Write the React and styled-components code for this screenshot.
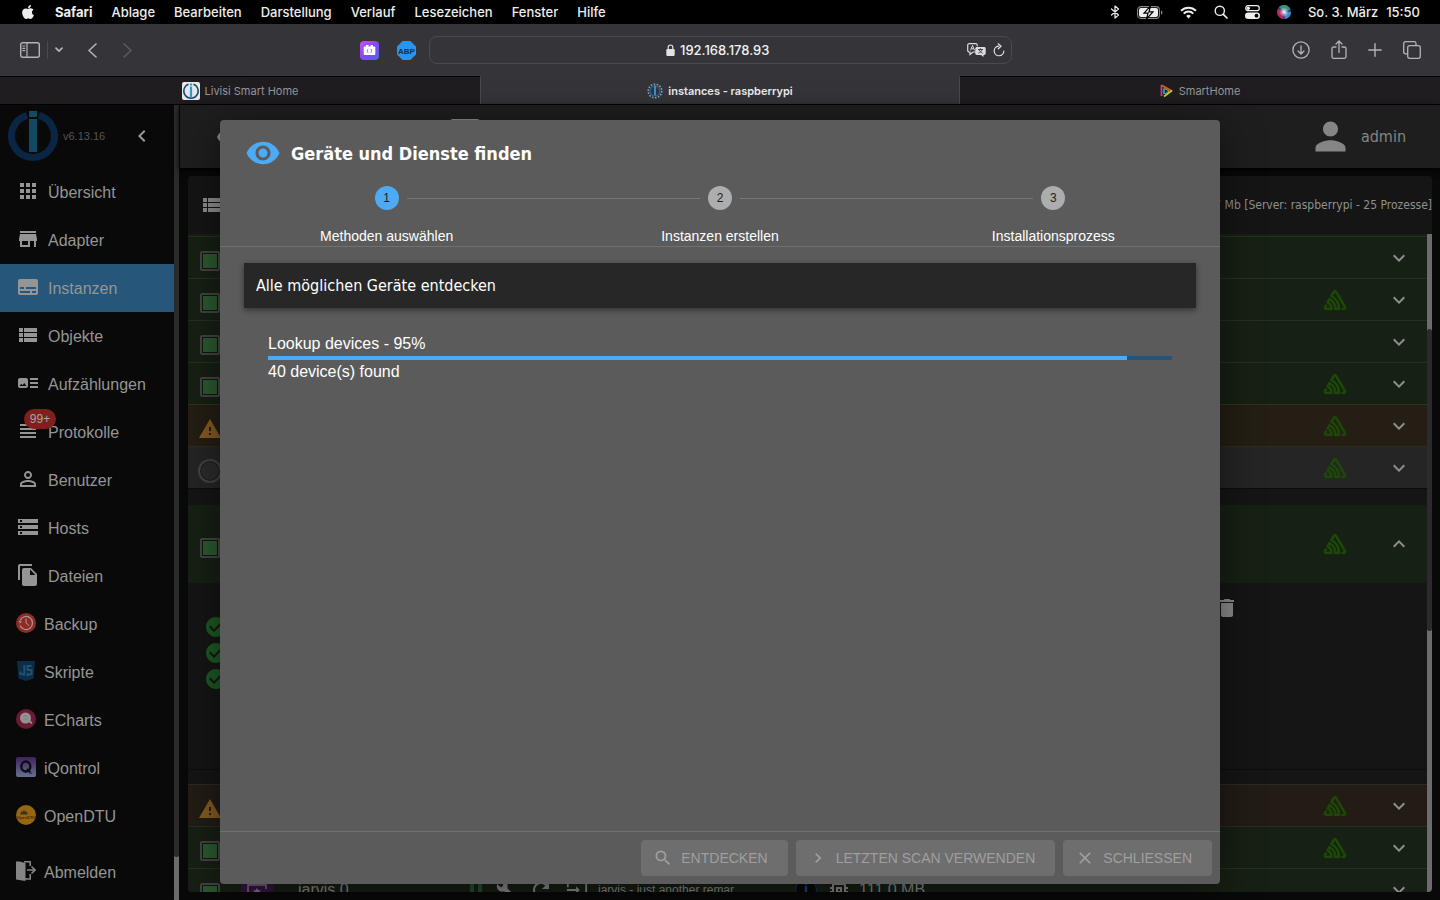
import React from "react";
import styled, { createGlobalStyle, css } from "styled-components";
import {
  MdApps,
  MdArtTrack,
  MdBuild,
  MdCheckCircle,
  MdChevronLeft,
  MdClose,
  MdDelete,
  MdExpandLess,
  MdExpandMore,
  MdFileCopy,
  MdInput,
  MdMemory,
  MdNavigateNext,
  MdPerson,
  MdPersonOutline,
  MdRefresh,
  MdSearch,
  MdStorage,
  MdStore,
  MdSubtitles,
  MdViewHeadline,
  MdViewList,
  MdVisibility,
  MdWarning,
} from "react-icons/md";
import { FaApple } from "react-icons/fa";
import { SiSentry } from "react-icons/si";

const system = `Inter, "Liberation Sans", sans-serif`;
const sans = `"Liberation Sans", Arial, sans-serif`;
const tahoma = `"DejaVu Sans Condensed", "Noto Sans", sans-serif`;

const GlobalStyle = createGlobalStyle`
  * {
    box-sizing: border-box;
  }
  body {
    margin: 0;
    background: #000000;
    font-family: ${sans};
    color: #8c8c8c;
  }
  svg {
    display: block;
    flex: none;
  }
  a {
    color: inherit;
    text-decoration: none;
  }
  button {
    font-family: inherit;
    padding: 0;
    border: none;
    background: none;
    color: inherit;
  }
`;

const Screen = styled.div`
  display: flex;
  flex-direction: column;
  height: 100vh;
  overflow: hidden;
`;

/* ---------- macOS menu bar ---------- */

const MenuBar = styled.header`
  display: flex;
  flex: none;
  align-items: center;
  justify-content: space-between;
  height: 24px;
  padding: 0 20px;
  background: #000000;
  color: #eeeeee;
  font-family: ${system};
  font-size: 13px;
  font-weight: 500;
`;

const MenuGroup = styled.div`
  display: flex;
  align-items: center;
  gap: ${(props) => props.$gap}px;
  white-space: nowrap;
`;

const MenuItem = styled.a`
  font-weight: ${(props) => (props.$bold ? 700 : 500)};
`;

/* ---------- Safari ---------- */

const Toolbar = styled.div`
  display: grid;
  grid-template-columns: 1fr minmax(0, 583px) 1fr;
  flex: none;
  align-items: center;
  height: 52px;
  background: #353439;
  color: #b4b4b6;
`;

const ToolGroup = styled.div`
  display: flex;
  align-items: center;
  justify-content: ${(props) => (props.$end ? "flex-end" : "space-between")};
  gap: ${(props) => props.$gap || 0}px;
  padding: ${(props) => props.$padding || "0"};
`;

const ToolButton = styled.button`
  display: flex;
  color: ${(props) => (props.$dim ? "#5c5b60" : "inherit")};
`;

const Separator = styled.span`
  width: 1px;
  height: 18px;
  background: #4a494e;
`;

const AddressBar = styled.div`
  display: grid;
  grid-template-columns: 1fr auto 1fr;
  align-items: center;
  height: 28px;
  padding: 0 6px;
  border: 1px solid #4a494e;
  border-radius: 8px;
  color: #e2e2e3;
`;

const Address = styled.label`
  grid-column: 2;
  display: flex;
  align-items: center;
  gap: 5px;

  input {
    width: 94px;
    padding: 0;
    border: none;
    outline: none;
    background: none;
    color: #f2f2f2;
    font-family: ${system};
    font-size: 13px;
    font-weight: 500;
  }
`;

const TabBar = styled.nav`
  display: grid;
  grid-template-columns: repeat(3, 1fr);
  flex: none;
  height: 28px;
  background: #1f1d20;
`;

const BrowserTab = styled.a`
  display: flex;
  align-items: center;
  justify-content: center;
  gap: 5px;
  border-top: 1px solid #000000;
  color: #98979a;
  font-family: ${system};
  font-size: 11px;
  font-weight: 400;
  ${(props) =>
    props.$active &&
    css`
      background: #353439;
      border-top-color: #353439;
      border-left: 1px solid #4a494e;
      border-right: 1px solid #4a494e;
      color: #ececec;
      font-weight: 600;
    `}
`;

/* ---------- ioBroker admin ---------- */

const Page = styled.div`
  position: relative;
  display: flex;
  flex: 1;
  min-height: 0;
  border-top: 1px solid #000000;
  background: #090909;
`;

const Sidebar = styled.aside`
  display: flex;
  flex: none;
  flex-direction: column;
  width: 174px;
  background: #090909;
`;

const SidebarHead = styled.div`
  display: flex;
  align-items: center;
  height: 63px;
  padding: 0 20px 2px 8px;
  font-size: 11px;
  color: #555555;

  span {
    flex: 1;
    padding-left: 5px;
  }
  button {
    color: #9a9a9a;
  }
`;

const NavItem = styled.a`
  display: flex;
  flex: none;
  align-items: center;
  gap: 8px;
  height: 48px;
  padding: 0 16px;
  font-size: 16px;
  color: #959595;
  background: ${(props) => (props.$selected ? "#26577a" : "transparent")};
`;

const NavIcon = styled.span`
  position: relative;
  padding-bottom: 2px;
`;

const NavLabel = styled.span`
  padding-top: 2px;
`;

const SidebarFoot = styled.div`
  margin-top: 8px;
`;

const Badge = styled.span`
  position: absolute;
  left: 8px;
  top: -10px;
  width: 32px;
  height: 20px;
  border-radius: 10px;
  background: #80201c;
  color: #a5a5a5;
  font-size: 12px;
  line-height: 20px;
  text-align: center;
`;

const SidebarTrack = styled.div`
  flex: none;
  width: 5px;
  margin-right: 1px;
  background: #6c6c6c;

  &::before {
    content: "";
    display: block;
    height: calc(100% - 43px);
    border-radius: 0 0 3px 3px;
    background: #2b2b2b;
  }
`;

const Main = styled.main`
  display: flex;
  flex: 1;
  flex-direction: column;
  min-width: 0;
`;

const AppBar = styled.div`
  display: flex;
  flex: none;
  align-items: center;
  height: 63px;
  padding: 0 34px 0 36px;
  background: #1e1e1e;
  box-shadow: 0 2px 6px #000000;
`;

const AppBarTools = styled.div`
  display: flex;
  flex: 1;
  align-items: center;

  i {
    width: 34px;
    height: 34px;
    margin-left: 126px;
    border-radius: 17px;
    background: #27527a;
  }
  b {
    width: 30px;
    height: 36px;
    margin-left: 50px;
    border-radius: 3px;
    background: #8c8c8c;
  }
`;

const User = styled.div`
  display: flex;
  align-items: center;
  gap: 8px;
  color: #858585;
  font-family: ${tahoma};
  font-size: 16px;
`;

const Panel = styled.section`
  display: flex;
  flex: 1;
  flex-direction: column;
  min-height: 0;
  margin: 8px;
  overflow: hidden;
  border-radius: 4px;
  background: #151515;
`;

const PanelHead = styled.div`
  display: flex;
  flex: none;
  align-items: center;
  justify-content: space-between;
  height: 58px;
  padding-left: 12px;
  color: #909090;
  font-family: ${tahoma};
  font-size: 12px;
`;

const PanelBody = styled.div`
  display: flex;
  flex: 1;
  min-height: 0;
`;

const List = styled.div`
  flex: 1;
  min-width: 0;
  padding-top: 2px;
  overflow: hidden;
  background: linear-gradient(#172014 2px, transparent 2px);
`;

const ListTrack = styled.div`
  flex: none;
  width: 5px;
  padding-top: 95px;
  background: #6c6c6c;

  &::before {
    content: "";
    display: block;
    height: 302px;
    border-radius: 3px;
    background: #2b2b2b;
  }
`;

const tones = {
  green: "#172014",
  orange: "#241e14",
  brown: "#221c15",
  grey: "#252525",
};

const lines = {
  green: "#253022",
  orange: "#2f331d",
  brown: "#2c2a24",
  grey: "#2e2c1d",
};

const Row = styled.div`
  display: flex;
  align-items: center;
  height: ${(props) => (props.$tall ? 78 : 42)}px;
  padding-right: 16px;
  border-top: ${(props) => (props.$tall ? "none" : `1px solid ${lines[props.$tone]}`)};
  background: ${(props) => tones[props.$tone]};
`;

const StateCell = styled.div`
  display: flex;
  justify-content: center;
  width: 24px;
  margin-left: 10px;
  padding-top: 7px;
`;

const AliveBox = styled.span`
  width: 20px;
  height: 20px;
  border: 2px solid #444444;
  border-radius: 2px;
  background: #2c5a30;
  box-shadow: inset 0 0 0 1px #10180f;
`;

const DisabledDot = styled.span`
  width: 24px;
  height: 24px;
  border: 2px solid #444444;
  border-radius: 12px;
  background: #2c2c2c;
  box-shadow: inset 0 0 0 1px #1c1c1c;
`;

const RowMiddle = styled.div`
  display: flex;
  flex: 1;
  align-items: center;
  min-width: 0;
`;

const SentryCell = styled.div`
  width: 24px;
  margin-right: 39px;
  color: #1d4a05;

  svg {
    overflow: visible;
    stroke: currentColor;
    stroke-width: 1;
  }
`;

const ExpandButton = styled.button`
  display: flex;
  color: #8e8e8e;
`;

const Spacer = styled.div`
  height: ${(props) => props.$height}px;
  border-top: 1px solid #0d0d0d;
`;

const Details = styled.div`
  display: flex;
  justify-content: space-between;
  height: 186px;
  padding: 13px 188px 0 16px;
`;

const Checks = styled.div`
  display: flex;
  flex-direction: column;
  gap: 2px;
  padding-top: 19px;
  color: #1d5a22;
`;

const AdapterTile = styled.span`
  display: grid;
  place-items: center;
  width: 32px;
  height: 32px;
  margin-left: 19px;
  background: #38134a;
`;

const InstanceName = styled.strong`
  width: 172px;
  margin-left: 25px;
  font-size: 16px;
  font-weight: 400;
`;

const Bars = styled.span`
  width: 12px;
  height: 20px;
  margin-right: 14px;
  border-left: 4px solid #24522a;
  border-right: 4px solid #24522a;
`;

const RowTools = styled.span`
  display: flex;
  align-items: center;
  gap: 13px;
`;

const InstanceNote = styled.span`
  width: 197px;
  margin-left: 10px;
  font-size: 12px;
`;

const InfoRing = styled.span`
  width: 22px;
  height: 22px;
  border: 1px solid #12355c;
  border-radius: 11px;
  background: #07090c;
  color: #1a4a80;
  font-size: 16px;
  font-weight: 700;
  line-height: 20px;
  text-align: center;
`;

const Memory = styled.span`
  display: flex;
  align-items: center;
  gap: 8px;
  margin-left: 10px;
  font-size: 16px;
`;

/* ---------- discovery dialog ---------- */

const Overlay = styled.div`
  position: absolute;
  inset: -1px 0 0;
  display: flex;
  justify-content: center;
  padding: 16px;
`;

const Dialog = styled.div`
  display: flex;
  flex-direction: column;
  width: 100%;
  max-width: 1000px;
  border-radius: 4px;
  background: #5b5b5b;
  color: #ffffff;
  box-shadow: 0 8px 40px rgba(0, 0, 0, 0.5);
`;

const DialogTitle = styled.h2`
  display: flex;
  align-items: center;
  gap: 10px;
  height: 66px;
  margin: 0;
  padding: 0 25px;
  font-family: ${tahoma};
  font-size: 18px;
  font-weight: 700;

  svg {
    color: #4dabf5;
  }
`;

const Stepper = styled.ol`
  display: grid;
  grid-template-columns: repeat(3, 1fr);
  margin: 0;
  padding: 0;
  list-style: none;
  border-bottom: 1px solid #707070;
`;

const Step = styled.li`
  display: grid;
  grid-template-columns: 1fr 24px 1fr;
  align-items: center;
  column-gap: 8px;
  font-size: 14px;
  line-height: 20px;

  /* connector halves on both sides of the circle */
  &::before,
  &::after {
    content: "";
    height: 1px;
    background: #777777;
  }
  &::before {
    order: 0;
  }
  &::after {
    order: 2;
  }
  &:first-child::before,
  &:last-child::after {
    visibility: hidden;
  }
`;

const StepCircle = styled.span`
  order: 1;
  width: 24px;
  height: 24px;
  border-radius: 12px;
  background: ${(props) => (props.$active ? "#4dabf5" : "#adadad")};
  color: #212121;
  font-size: 12px;
  line-height: 24px;
  text-align: center;
`;

const StepLabel = styled.span`
  order: 3;
  grid-column: 1 / -1;
  padding-top: 16px;
  text-align: center;
`;

const DialogContent = styled.div`
  flex: 1;
  padding: 16px 24px;
`;

const Heading = styled.div`
  padding: 0 12px;
  background: #272727;
  box-shadow: 0 2px 6px rgba(0, 0, 0, 0.45);
  font-family: ${tahoma};
  font-size: 16px;
  line-height: 45px;
`;

const Lookup = styled.div`
  padding: 24px;
  font-size: 16px;
  line-height: 24px;
`;

const Progress = styled.div`
  height: 4px;
  background: #265478;

  div {
    height: 4px;
    background: #4dabf5;
  }
`;

const DialogActions = styled.div`
  display: flex;
  justify-content: flex-end;
  gap: 8px;
  padding: 8px;
  border-top: 1px solid #707070;
`;

const ActionButton = styled.button`
  display: flex;
  align-items: center;
  gap: 8px;
  height: 36px;
  padding: 0 20px 0 12px;
  border-radius: 4px;
  background: #6e6e6e;
  color: #9f9f9f;
  font-size: 14px;
  text-transform: uppercase;
`;

/* ---------- drawings ---------- */

const stroke = {
  fill: "none",
  stroke: "currentColor",
  strokeWidth: 1.4,
  strokeLinecap: "round",
  strokeLinejoin: "round",
};

const BluetoothIcon = () => (
  <svg width="10" height="14" viewBox="0 0 10 14" {...stroke} strokeWidth="1.2">
    <path d="M1.5 4l7 6L5 13V1l3.500 3-7 6" />
  </svg>
);

const BatteryIcon = () => (
  <svg width="26" height="13" viewBox="0 0 26 13">
    <rect x="0.6" y="0.6" width="21.800" height="11.800" rx="3.400" fill="none" stroke="#8a8a8a" strokeWidth="1.100" />
    <rect x="2" y="2" width="19" height="9" rx="2" fill="#eeeeee" />
    <path d="M24 4.500c1 .3 1.400 1 1.400 2s-.4 1.700-1.400 2z" fill="#8a8a8a" />
    <path d="M13.500 0L7 7.200h4L9.500 13 16 5.800h-4z" fill="#eeeeee" stroke="#000000" strokeWidth="1.200" />
  </svg>
);

const WifiIcon = () => (
  <svg width="17" height="13" viewBox="0 0 17 13" fill="none" stroke="#eeeeee" strokeWidth="2">
    <path d="M1 4.800a10.700 10.700 0 0 1 15 0M3.700 7.600a6.800 6.800 0 0 1 9.600 0" />
    <path d="M8.500 12.400L6.200 9.900a3.300 3.300 0 0 1 4.600 0z" fill="#eeeeee" stroke="none" />
  </svg>
);

const SpotlightIcon = () => (
  <svg width="14" height="14" viewBox="0 0 14 14" {...stroke}>
    <circle cx="5.800" cy="5.800" r="4.600" />
    <path d="M9.300 9.300L13 13" strokeWidth="1.700" />
  </svg>
);

const ControlIcon = () => (
  <svg width="15" height="14" viewBox="0 0 15 14">
    <rect x="0.700" y="0.700" width="13.600" height="5" rx="2.500" fill="none" stroke="#eeeeee" strokeWidth="1.200" />
    <circle cx="3.300" cy="3.200" r="1.700" fill="#eeeeee" />
    <rect x="0" y="7.500" width="15" height="6.500" rx="3.200" fill="#eeeeee" />
    <circle cx="11.500" cy="10.700" r="1.900" fill="#000000" />
  </svg>
);

const SiriIcon = () => (
  <svg width="14" height="14" viewBox="0 0 14 14">
    <defs>
      <radialGradient id="siri">
        <stop offset="0" stopColor="#ffffff" />
        <stop offset="0.5" stopColor="#ffffff" stopOpacity="0.4" />
        <stop offset="1" stopColor="#ffffff" stopOpacity="0" />
      </radialGradient>
    </defs>
    <circle cx="7" cy="7" r="7" fill="#34437c" />
    <path d="M1 4a7 7 0 0 0 5 10l1-7z" fill="#b4285f" />
    <path d="M2 2a7 7 0 0 1 11.500 2.500L7 7z" fill="#3b8d80" />
    <path d="M14 7a7 7 0 0 1-6 7L7 7z" fill="#3d8bd0" />
    <circle cx="7" cy="7" r="5" fill="url(#siri)" />
  </svg>
);

const SidebarIcon = () => (
  <svg width="20" height="16" viewBox="0 0 20 16" {...stroke}>
    <rect x="0.700" y="0.700" width="18.600" height="14.600" rx="2" />
    <path d="M7 1v14M2.800 4h2M2.800 6.300h2M2.800 8.600h2" strokeWidth="1.200" />
  </svg>
);

const CaretIcon = () => (
  <svg width="8" height="6" viewBox="0 0 8 6" {...stroke} strokeWidth="1.700">
    <path d="M1 1.200l3 3 3-3" />
  </svg>
);

const BackIcon = () => (
  <svg width="9" height="15" viewBox="0 0 9 15" {...stroke} strokeWidth="1.600">
    <path d="M8 1L1 7.500 8 14" />
  </svg>
);

const ForwardIcon = () => (
  <svg width="9" height="15" viewBox="0 0 9 15" {...stroke} strokeWidth="1.600">
    <path d="M1 1l7 6.500L1 14" />
  </svg>
);

const BrickIcon = () => (
  <svg width="19" height="19" viewBox="0 0 19 19">
    <defs>
      <linearGradient id="brick" x1="0" y1="0" x2="1" y2="1">
        <stop offset="0" stopColor="#c552ee" />
        <stop offset="0.5" stopColor="#8548f0" />
        <stop offset="1" stopColor="#4a63f4" />
      </linearGradient>
    </defs>
    <rect width="19" height="19" rx="4" fill="url(#brick)" />
    <path d="M4.500 5.500H6V4h2.500v1.500h2V4H13v1.500h1.500c.6 0 .8.300.8.800v7c0 .5-.3.800-.8.800h-10c-.5 0-.8-.3-.8-.8v-7c0-.5.300-.8.800-.8z" fill="#ffffff" />
    <path d="M8.200 7.800c-1 .8-.2 1.200-1 2 .8.800 0 1.300 1 2M10.800 7.800c1 .8.200 1.200 1 2-.8.800 0 1.300-1 2" fill="none" stroke="#8a4df0" />
  </svg>
);

const AbpIcon = () => (
  <svg width="19" height="19" viewBox="0 0 19 19">
    <path d="M5.600 0h7.800L19 5.600v7.800L13.400 19H5.600L0 13.400V5.600z" fill="#2994ee" />
    <text x="9.500" y="12.500" textAnchor="middle" fontFamily="Liberation Sans" fontSize="8" fontWeight="700" fill="#252a38">
      ABP
    </text>
  </svg>
);

const LockIcon = () => (
  <svg width="9" height="12" viewBox="0 0 9 12">
    <rect x="0.300" y="5" width="8.400" height="7" rx="1.200" fill="#e2e2e3" />
    <path d="M2.200 5.500V3.300a2.300 2.300 0 0 1 4.600 0v2.200" fill="none" stroke="#e2e2e3" strokeWidth="1.200" />
  </svg>
);

const TranslateIcon = () => (
  <svg width="19" height="14" viewBox="0 0 19 14">
    <path d="M9 9H6l-3 2.500V9H2.300C1.300 9 .7 8.300.7 7.400V2.300C.7 1.400 1.300.7 2.300.7h6.400c1 0 1.600.7 1.600 1.600v.9" fill="none" stroke="#dcdcdd" strokeWidth="1.200" />
    <path d="M3.500 7.300l2-4.800 2 4.800M4.300 5.800h2.400" fill="none" stroke="#dcdcdd" />
    <path d="M10 4h7c1 0 1.700.7 1.700 1.600v4.700c0 1-.7 1.600-1.700 1.600h-.5v2L14 11.900h-4c-1 0-1.700-.7-1.700-1.600V5.600C8.300 4.700 9 4 10 4z" fill="#dcdcdd" />
    <path d="M11 6.500h5M13.500 5.300v1.200M15 6.500c-.4 1.800-2 3-3.700 3.700M12 6.500c.4 1.800 2 3 3.700 3.700" fill="none" stroke="#353439" strokeWidth="0.900" />
  </svg>
);

const ReloadIcon = () => (
  <svg width="12" height="14" viewBox="0 0 12 14" {...stroke} strokeWidth="1.200">
    <path d="M5.500 3.200A4.800 4.800 0 1 0 10.800 8M5.200.8l2.800 2.500-2.700 2.500" />
  </svg>
);

const DownloadIcon = () => (
  <svg width="18" height="18" viewBox="0 0 18 18" {...stroke} strokeWidth="1.300">
    <circle cx="9" cy="9" r="8.100" />
    <path d="M9 4.800v8M6 10l3 3 3-3" />
  </svg>
);

const ShareIcon = () => (
  <svg width="16" height="20" viewBox="0 0 16 20" {...stroke} strokeWidth="1.300">
    <path d="M5 7H2.500C1.500 7 1 7.500 1 8.500v8c0 1 .5 1.800 1.500 1.800h11c1 0 1.500-.8 1.500-1.800v-8c0-1-.5-1.500-1.500-1.500H11M8 12.500V1.500M5 4l3-3 3 3" />
  </svg>
);

const PlusIcon = () => (
  <svg width="14" height="14" viewBox="0 0 14 14" {...stroke}>
    <path d="M7 .8v12.400M.8 7h12.400" />
  </svg>
);

const OverviewIcon = () => (
  <svg width="18" height="18" viewBox="0 0 18 18" {...stroke} strokeWidth="1.300">
    <rect x="4.700" y="4.700" width="12.600" height="12.600" rx="2" />
    <path d="M4.700 12.800H2.500c-1.200 0-1.800-.7-1.800-1.800V2.500C.7 1.400 1.400.7 2.500.7h8.700c1.100 0 1.800.7 1.800 1.800v2" />
  </svg>
);

const LivisiIcon = () => (
  <svg width="18" height="18" viewBox="0 0 18 18">
    <rect width="18" height="18" rx="2" fill="#e8e8e8" />
    <path d="M6.500 2.200a7.200 7.200 0 1 0 5 0" fill="none" stroke="#174a78" strokeWidth="1.500" />
    <path d="M9 1.500v2M9 4.500v10.500" stroke="#3399cc" strokeWidth="2.200" />
  </svg>
);

const BrokerTabIcon = () => (
  <svg width="16" height="16" viewBox="0 0 16 16" fill="none">
    <circle cx="8" cy="8" r="6.800" stroke="#8fa5b5" strokeWidth="1.600" strokeDasharray="1.500 1.550" />
    <circle cx="8" cy="8" r="5" stroke="#245f8c" strokeWidth="1.600" />
    <path d="M8 2.500v10" stroke="#3d9bc8" strokeWidth="1.800" />
  </svg>
);

const SmartHomeIcon = () => (
  <svg width="14" height="14" viewBox="0 0 14 14" fill="none" strokeWidth="1.800">
    <path d="M1.500 1v11" stroke="#c23f8d" />
    <path d="M1.500 1.200L12 7" stroke="#e05a2b" />
    <path d="M12 6.500L4 12.500" stroke="#c9c92f" />
    <path d="M4 4.500v5.500" stroke="#2f9fd0" />
    <path d="M4.500 4.500L9 7l-4 3" stroke="#8cbf3b" strokeWidth="1" />
  </svg>
);

const BrokerLogo = () => (
  <svg width="50" height="50" viewBox="0 0 50 50" fill="none">
    <path d="M19 4.300a21.500 21.500 0 1 0 12 0" stroke="#0b2544" strokeWidth="7" />
    <path d="M21 0h8v6h-8zM21 8h8v33h-8z" fill="#134a63" />
  </svg>
);

const BackupIcon = () => (
  <svg width="20" height="20" viewBox="0 0 20 20" fill="none" stroke="#a39a98">
    <circle cx="10" cy="10" r="10" fill="#8f2a24" stroke="none" />
    <path d="M4 12.500a6.500 6.500 0 1 0 0-5" strokeWidth="1.200" />
    <path d="M2.500 8l1.500 2.500L6 8.500z" fill="#a39a98" stroke="none" />
    <path d="M10 5.500V10l3 2.500" />
  </svg>
);

const ScriptIcon = () => (
  <svg width="20" height="20" viewBox="0 0 20 20" fill="none">
    <path d="M1 0h18l-1.500 17.500L10 20l-7.500-2.500z" fill="#0d2c48" />
    <path d="M8.300 4v9.700l-3.800-.8v-2.500M15.500 5h-4v4h4v4l-4 1.200v-2.500" stroke="#1d5474" strokeWidth="1.900" />
  </svg>
);

const EchartsIcon = () => (
  <svg width="20" height="20" viewBox="0 0 20 20">
    <circle cx="10" cy="10" r="10" fill="#6b1a33" />
    <circle cx="9.500" cy="9" r="5.500" fill="#969294" />
    <path d="M12 12.500h2l.5-1.500 1.500 2.500c.8 1-.2 1.500-1 1.200z" fill="#969294" />
    <path d="M7 8c2-2 4-1 5 .5M7.500 10.500c1.500-1 3-.5 4 .5" stroke="#7a6c72" fill="none" strokeWidth="0.700" />
  </svg>
);

const IqontrolIcon = () => (
  <svg width="20" height="20" viewBox="0 0 20 20">
    <defs>
      <linearGradient id="iq" x1="0" y1="0" x2="0" y2="1">
        <stop offset="0" stopColor="#3e2160" />
        <stop offset="1" stopColor="#66728f" />
      </linearGradient>
    </defs>
    <rect width="20" height="20" rx="2" fill="url(#iq)" />
    <ellipse cx="9.800" cy="9.500" rx="4.500" ry="5" fill="none" stroke="#0d0d16" strokeWidth="2.400" />
    <path d="M11 12l3.500 3.800" stroke="#0d0d16" strokeWidth="2" />
    <circle cx="15" cy="16" r="1.300" fill="#532b86" />
  </svg>
);

const OpenDtuIcon = () => (
  <svg width="20" height="20" viewBox="0 0 20 20">
    <circle cx="10" cy="10" r="10" fill="#986512" />
    <path d="M4 9.500l1.500-3h2V5h1v1.500H11l.8 3z" fill="#3d3220" />
    <text x="10" y="14" textAnchor="middle" fontFamily="Liberation Sans" fontSize="4" fontWeight="700" fill="#3d2d10">
      OpenDTU
    </text>
  </svg>
);

const LogoutIcon = () => (
  <svg width="20" height="20" viewBox="0 0 20 20" fill="none" stroke="#858585" strokeWidth="1.600">
    <path d="M0 .5h3.500L9.500 2v18L0 18.500z" fill="#858585" stroke="none" />
    <path d="M8 .8h6.200V5M14.200 13v5H9M11 9h8M15.500 5.500L19 9l-3.500 3.500" />
  </svg>
);

const JarvisIcon = () => (
  <svg width="32" height="32" viewBox="0 0 32 32" fill="none" stroke="#857a8c" strokeWidth="1.500">
    <path d="M7 18v-7h18v4M25 18v7H7v-3" />
    <path d="M16 13.500l1.200 2.800 3 .2-2.300 2 .8 3-2.700-1.600-2.700 1.600.8-3-2.300-2 3-.2z" fill="#857a8c" stroke="none" />
  </svg>
);

/* ---------- data ---------- */

const menus = ["Ablage", "Bearbeiten", "Darstellung", "Verlauf", "Lesezeichen", "Fenster", "Hilfe"];

const pages = [
  { label: "Übersicht", icon: <MdApps size={24} /> },
  { label: "Adapter", icon: <MdStore size={24} /> },
  { label: "Instanzen", icon: <MdSubtitles size={24} />, selected: true },
  { label: "Objekte", icon: <MdViewList size={24} /> },
  { label: "Aufzählungen", icon: <MdArtTrack size={24} /> },
  { label: "Protokolle", icon: <MdViewHeadline size={24} />, badge: "99+" },
  { label: "Benutzer", icon: <MdPersonOutline size={24} /> },
  { label: "Hosts", icon: <MdStorage size={24} /> },
  { label: "Dateien", icon: <MdFileCopy size={24} /> },
  { label: "Backup", icon: <BackupIcon /> },
  { label: "Skripte", icon: <ScriptIcon /> },
  { label: "ECharts", icon: <EchartsIcon /> },
  { label: "iQontrol", icon: <IqontrolIcon /> },
  { label: "OpenDTU", icon: <OpenDtuIcon /> },
];

const instances = [
  { tone: "green", state: "alive" },
  { tone: "green", state: "alive", sentry: true },
  { tone: "green", state: "alive" },
  { tone: "green", state: "alive", sentry: true },
  { tone: "orange", state: "warning", sentry: true },
  { tone: "grey", state: "disabled", sentry: true },
];

const steps = ["Methoden auswählen", "Instanzen erstellen", "Installationsprozess"];

const lookup = { name: "Lookup devices", percent: 95, found: 40 };

function InstanceRow({ tone, state, sentry, open, children }) {
  return (
    <Row $tone={tone} $tall={open}>
      <StateCell>
        {state === "alive" && <AliveBox />}
        {state === "warning" && <MdWarning size={24} color="#855c22" />}
        {state === "disabled" && <DisabledDot />}
      </StateCell>
      <RowMiddle>{children}</RowMiddle>
      <SentryCell>{sentry && <SiSentry size={22} />}</SentryCell>
      <ExpandButton type="button" aria-label={open ? "Zuklappen" : "Aufklappen"}>
        {open ? <MdExpandLess size={24} /> : <MdExpandMore size={24} />}
      </ExpandButton>
    </Row>
  );
}

function Browser() {
  return (
    <>
      <MenuBar>
        <MenuGroup $gap={19}>
          <FaApple size={16} />
          <MenuItem href="#" $bold>Safari</MenuItem>
          {menus.map((menu) => (
            <MenuItem href="#" key={menu}>{menu}</MenuItem>
          ))}
        </MenuGroup>
        <MenuGroup $gap={17}>
          <BluetoothIcon />
          <BatteryIcon />
          <WifiIcon />
          <SpotlightIcon />
          <ControlIcon />
          <SiriIcon />
          <MenuGroup $gap={8}>
            <span>So. 3. März</span>
            <span>15:50</span>
          </MenuGroup>
        </MenuGroup>
      </MenuBar>
      <Toolbar>
        <ToolGroup $padding="0 13px 0 20px">
          <ToolGroup $gap={7}>
            <ToolButton aria-label="Seitenleiste"><SidebarIcon /></ToolButton>
            <Separator />
            <ToolButton aria-label="Tabgruppen"><CaretIcon /></ToolButton>
            <ToolGroup $gap={26} $padding="0 0 0 18px">
              <ToolButton aria-label="Zurück"><BackIcon /></ToolButton>
              <ToolButton aria-label="Vorwärts" $dim><ForwardIcon /></ToolButton>
            </ToolGroup>
          </ToolGroup>
          <ToolGroup $gap={18}>
            <ToolButton aria-label="Erweiterung"><BrickIcon /></ToolButton>
            <ToolButton aria-label="Adblock Plus"><AbpIcon /></ToolButton>
          </ToolGroup>
        </ToolGroup>
        <AddressBar>
          <Address>
            <LockIcon />
            <input aria-label="Adresse" defaultValue="192.168.178.93" />
          </Address>
          <ToolGroup $end $gap={7}>
            <ToolButton aria-label="Übersetzen"><TranslateIcon /></ToolButton>
            <ToolButton aria-label="Neu laden"><ReloadIcon /></ToolButton>
          </ToolGroup>
        </AddressBar>
        <ToolGroup $end $gap={21} $padding="0 19px 0 0">
          <ToolButton aria-label="Downloads"><DownloadIcon /></ToolButton>
          <ToolButton aria-label="Teilen"><ShareIcon /></ToolButton>
          <ToolButton aria-label="Neuer Tab"><PlusIcon /></ToolButton>
          <ToolButton aria-label="Tabübersicht"><OverviewIcon /></ToolButton>
        </ToolGroup>
      </Toolbar>
      <TabBar>
        <BrowserTab href="#"><LivisiIcon />Livisi Smart Home</BrowserTab>
        <BrowserTab href="#" $active><BrokerTabIcon />instances - raspberrypi</BrowserTab>
        <BrowserTab href="#"><SmartHomeIcon />SmartHome</BrowserTab>
      </TabBar>
    </>
  );
}

function Discovery() {
  return (
    <Overlay>
      <Dialog role="dialog" aria-labelledby="discovery-title">
        <DialogTitle id="discovery-title">
          <MdVisibility size={36} />
          Geräte und Dienste finden
        </DialogTitle>
        <Stepper>
          {steps.map((step, index) => (
            <Step key={step}>
              <StepCircle $active={index === 0}>{index + 1}</StepCircle>
              <StepLabel>{step}</StepLabel>
            </Step>
          ))}
        </Stepper>
        <DialogContent>
          <Heading>Alle möglichen Geräte entdecken</Heading>
          <Lookup>
            <div>{lookup.name} - {lookup.percent}%</div>
            <Progress role="progressbar" aria-valuenow={lookup.percent}>
              <div style={{ width: `${lookup.percent}%` }} />
            </Progress>
            <div>{lookup.found} device(s) found</div>
          </Lookup>
        </DialogContent>
        <DialogActions>
          <ActionButton disabled><MdSearch size={20} />Entdecken</ActionButton>
          <ActionButton disabled><MdNavigateNext size={20} />Letzten Scan verwenden</ActionButton>
          <ActionButton disabled><MdClose size={20} />Schliessen</ActionButton>
        </DialogActions>
      </Dialog>
    </Overlay>
  );
}

function App() {
  return (
    <Screen>
      <GlobalStyle />
      <Browser />
      <Page>
        <Sidebar>
          <SidebarHead>
            <BrokerLogo />
            <span>v6.13.16</span>
            <button type="button" aria-label="Menü einklappen"><MdChevronLeft size={24} /></button>
          </SidebarHead>
          {pages.map((page) => (
            <NavItem href="#" key={page.label} $selected={page.selected}>
              <NavIcon>
                {page.icon}
                {page.badge && <Badge>{page.badge}</Badge>}
              </NavIcon>
              <NavLabel>{page.label}</NavLabel>
            </NavItem>
          ))}
          <SidebarFoot>
            <NavItem href="#">
              <NavIcon><LogoutIcon /></NavIcon>
              <NavLabel>Abmelden</NavLabel>
            </NavItem>
          </SidebarFoot>
        </Sidebar>
        <SidebarTrack />
        <Main>
          <AppBar>
            <AppBarTools>
              <MdVisibility size={24} />
              <i />
              <b />
            </AppBarTools>
            <User>
              <MdPerson size={45} />
              admin
            </User>
          </AppBar>
          <Panel>
            <PanelHead>
              <MdViewList size={24} />
              <span>7 Mb [Server: raspberrypi - 25 Prozesse]</span>
            </PanelHead>
            <PanelBody>
              <List>
                {instances.map((instance, index) => (
                  <InstanceRow key={index} {...instance} />
                ))}
                <Spacer $height={17} />
                <InstanceRow tone="green" state="alive" sentry open />
                <Details>
                  <Checks>
                    <MdCheckCircle size={24} />
                    <MdCheckCircle size={24} />
                    <MdCheckCircle size={24} />
                  </Checks>
                  <MdDelete size={24} />
                </Details>
                <Spacer $height={15} />
                <InstanceRow tone="brown" state="warning" sentry />
                <InstanceRow tone="green" state="alive" sentry />
                <InstanceRow tone="green" state="alive">
                  <AdapterTile><JarvisIcon /></AdapterTile>
                  <InstanceName>jarvis.0</InstanceName>
                  <Bars />
                  <RowTools>
                    <MdBuild size={20} />
                    <MdRefresh size={24} />
                    <MdInput size={22} />
                  </RowTools>
                  <InstanceNote>jarvis - just another remar...</InstanceNote>
                  <InfoRing>i</InfoRing>
                  <Memory><MdMemory size={24} />111.0 MB</Memory>
                </InstanceRow>
              </List>
              <ListTrack />
            </PanelBody>
          </Panel>
        </Main>
        <Discovery />
      </Page>
    </Screen>
  );
}

export default App;
